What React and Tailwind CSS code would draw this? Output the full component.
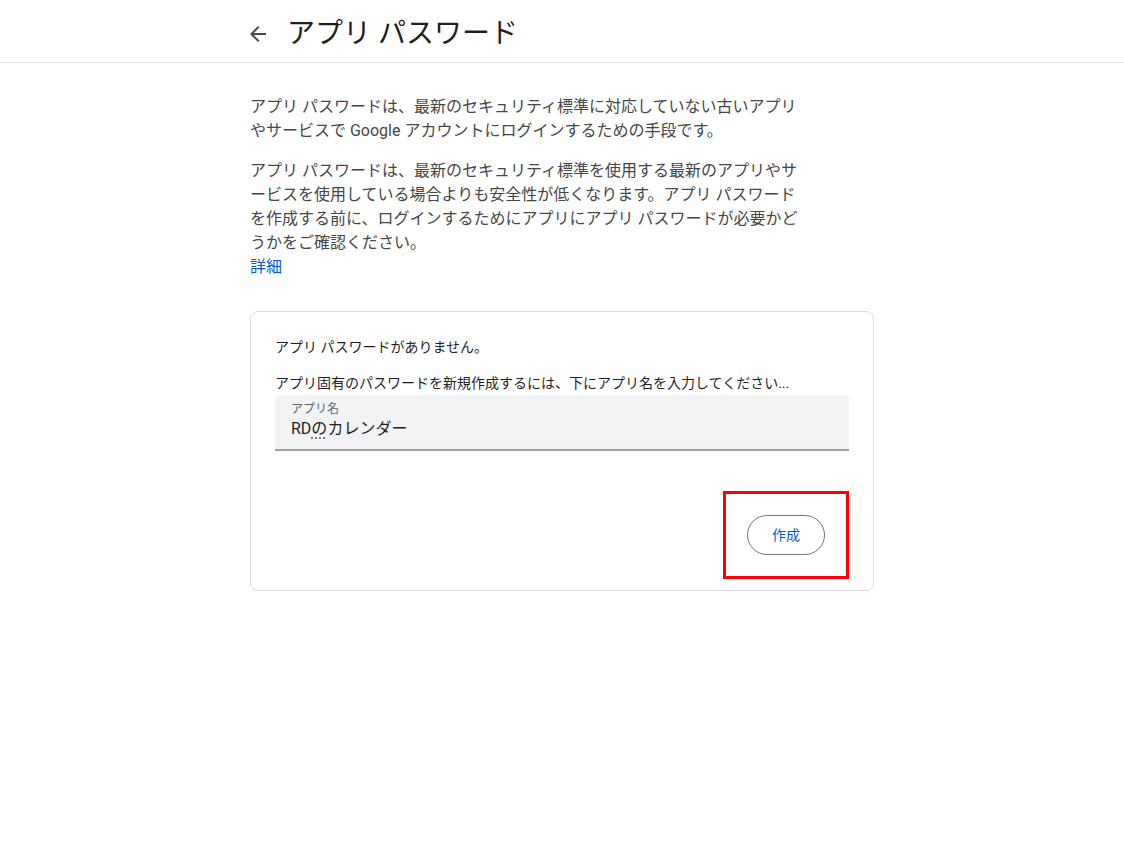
export default function App() {
  const font = { fontFamily: "Roboto, 'Noto Sans CJK JP', sans-serif" };
  return (
    <div className="min-h-[863px] bg-white text-[#1f1f1f]" style={font}>
      <header className="h-[63px] border-b border-[#e3e3e3]">
        <div className="mx-auto flex h-full w-[624px] items-center pt-[6px]">
          <svg className="-ml-1 h-6 w-6 text-[#444746]" viewBox="0 0 24 24" fill="currentColor">
            <path d="M20 11H7.83l5.59-5.59L12 4l-8 8 8 8 1.41-1.41L7.83 13H20v-2z" />
          </svg>
          <h1 className="ml-[17px] text-[28px] leading-9 font-normal text-[#1f1f1f]">アプリ パスワード</h1>
        </div>
      </header>
      <main className="mx-auto w-[624px] pt-[32px]">
        <div className="w-[556px] text-base leading-6 text-[#444746]">
          <p className="mb-4">アプリ パスワードは、最新のセキュリティ標準に対応していない古いアプリやサービスで Google アカウントにログインするための手段です。</p>
          <p>アプリ パスワードは、最新のセキュリティ標準を使用する最新のアプリやサービスを使用している場合よりも安全性が低くなります。アプリ パスワードを作成する前に、ログインするためにアプリにアプリ パスワードが必要かどうかをご確認ください。</p>
          <a className="block text-[#0b57d0]">詳細</a>
        </div>
        <section className="mt-[32px] rounded-lg border border-[#dadce0] px-6 pt-[25px] pb-[11px]">
          <p className="text-sm leading-5 text-[#1f1f1f]">アプリ パスワードがありません。</p>
          <p className="mt-4 text-sm leading-5 text-[#1f1f1f]">アプリ固有のパスワードを新規作成するには、下にアプリ名を入力してください...</p>
          <div className="mt-[2px] h-[56px] rounded-t bg-[#f1f3f4] border-b-2 border-[#9aa0a6] pl-4 pt-[6px]">
            <div className="text-xs leading-4 text-[#5f6368]">アプリ名</div>
            <div className="text-base leading-6 text-[#1f1f1f]">
              RD<span className="underline decoration-dotted decoration-[#5f6368] underline-offset-4">の</span>カレンダー
            </div>
          </div>
          <div className="mt-10 flex justify-end">
            <div className="border-[3px] border-[#ff0000] px-[21px] py-[21px]">
              <button className="h-10 rounded-full border border-[#747775] px-6 text-sm font-normal text-[#0b57d0]">作成</button>
            </div>
          </div>
        </section>
      </main>
    </div>
  );
}
